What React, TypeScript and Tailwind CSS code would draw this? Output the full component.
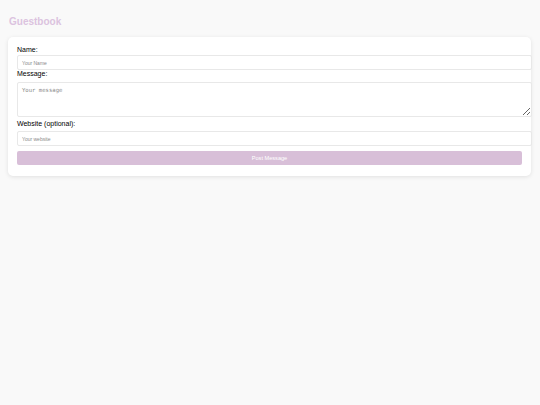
import React from 'react';

export default function App() {
  const [name, setName] = React.useState('');
  const [message, setMessage] = React.useState('');
  const [website, setWebsite] = React.useState('');

  const field =
    'block w-[calc(100%+10px)] rounded-[2px] border border-[#e8e8e8] bg-white px-[4px] text-[#333] outline-none placeholder:text-[#8a8a8a]';

  return (
    <div className="min-h-screen bg-[#f9f9f9] pl-[8px] pr-[9px] pt-[16px] font-['Liberation_Sans',Arial,sans-serif]">
      <h1 className="pl-[1px] text-[10px] font-bold leading-[12px] text-[#dcc3df]">Guestbook</h1>

      <form
        className="mt-[9px] flex flex-col rounded-[5px] bg-white px-[9px] pb-[11px] pt-[9px] shadow-[0_1px_4px_rgba(0,0,0,0.1)]"
        onSubmit={(e) => e.preventDefault()}
      >
        <label className="mb-[1px] text-[7px] leading-[8px] text-black">Name:</label>
        <input
          className={field + ' h-[15px] text-[5px]'}
          placeholder="Your Name"
          value={name}
          onChange={(e) => setName(e.target.value)}
        />

        <label className="mb-[4px] text-[7px] leading-[8px] text-black">Message:</label>
        <textarea
          className={field + " h-[35px] pt-[4px] font-['DejaVu_Sans_Mono',monospace] text-[5.6px] leading-[7px]"}
          placeholder="Your message"
          value={message}
          onChange={(e) => setMessage(e.target.value)}
        />

        <label className="mb-[3px] mt-[3px] text-[7px] leading-[8px] text-black">Website (optional):</label>
        <input
          className={field + ' h-[15px] text-[5px]'}
          placeholder="Your website"
          value={website}
          onChange={(e) => setWebsite(e.target.value)}
        />

        <button
          type="submit"
          className="mt-[5px] h-[14px] w-full rounded-[2px] bg-[#d8bfd8] text-[5.6px] text-white"
        >
          Post Message
        </button>
      </form>
    </div>
  );
}
